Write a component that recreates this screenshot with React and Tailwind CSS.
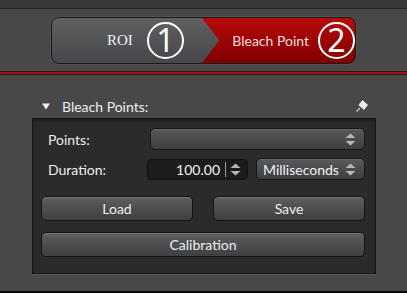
import React from "react";

function SpinArrows({ className = "" }) {
  return (
    <svg width="11" height="13" viewBox="0 0 11 13" className={className}>
      <polygon points="5.5,0.5 10.5,5 0.5,5" fill="#b4b6b8" />
      <polygon points="0.5,8 10.5,8 5.5,12.5" fill="#b4b6b8" />
    </svg>
  );
}

function Circle({ n }) {
  return (
    <div className="w-[37px] h-[37px] rounded-full border-2 border-white flex items-center justify-center text-white text-[32px] leading-none font-['Noto_Sans',sans-serif]">
      <span className="mt-[-1px]">{n}</span>
    </div>
  );
}

function Button({ children, className = "" }) {
  return (
    <div
      className={`h-[25px] rounded-[5px] border border-[#141414] bg-gradient-to-b from-[#5c5e60] to-[#3d3f41] shadow-[inset_0_1px_0_rgba(255,255,255,0.12)] flex items-center justify-center text-[#eeeeee] text-[14px] ${className}`}
    >
      {children}
    </div>
  );
}

export default function App() {
  return (
    <div className="w-[407px] h-[293px] bg-[#484848] flex flex-col font-['Lato',sans-serif] overflow-hidden">
      <div className="h-[9px] bg-[#383838] border-b border-[#242424]" />
      <div className="mt-[8px] mx-auto w-[305px] h-[47px] rounded-[8px] border border-[#1a1a1a] bg-gradient-to-b from-[#b80a0a] to-[#800000] shadow-[0_0_0_1px_rgba(255,255,255,0.06)] flex overflow-hidden">
        <div className="w-[168px] h-full bg-gradient-to-b from-[#5e6062] to-[#45474a] [clip-path:polygon(0_0,150px_0,100%_50%,150px_100%,0_100%)] flex items-center pl-[55px] gap-[14px] relative z-10">
          <span className="text-[#f2f2f2] text-[15px] font-['Liberation_Serif',serif]">ROI</span>
          <Circle n="1" />
        </div>
        <div className="ml-[-18px] flex items-center pl-[31px] gap-[9px]">
          <span className="text-[#f4dede] text-[14px] whitespace-nowrap">Bleach Point</span>
          <Circle n="2" />
        </div>
      </div>
      <div className="mt-[7px] h-[4px] border-t border-[#2a1818] border-b border-b-[#1e1e1e] bg-[#a81010]" />
      <div className="mt-[22px] h-[18px] flex items-center pl-[42px] pr-[38px]">
        <svg width="8" height="7" viewBox="0 0 8 7">
          <polygon points="0,0.5 8,0.5 4,6.5" fill="#f0f0f0" />
        </svg>
        <span className="ml-[12px] text-[#eeeeee] text-[14px]">Bleach Points:</span>
        <div className="flex-1" />
        <svg width="14" height="14" viewBox="0 0 14 14">
          <polygon points="7.5,1 13,6 9,11 3.5,6" fill="#ececec" />
          <line x1="5" y1="9" x2="1.5" y2="12.5" stroke="#d0d0d0" strokeWidth="1.2" />
        </svg>
      </div>
      <div className="mt-[3px] ml-[32px] w-[344px] h-[156px] bg-[#2b2b2b] border border-[#161616] shadow-[0_1px_0_#5a5a5a,inset_0_2px_3px_rgba(0,0,0,0.35)] pl-[8px] pr-[10px] pt-[9px] flex flex-col">
        <div className="h-[22px] flex items-center">
          <span className="pl-[7px] w-[109px] text-[#eeeeee] text-[14px]">Points:</span>
          <div className="flex-1 h-[22px] rounded-[5px] border border-[#161616] bg-gradient-to-b from-[#57595b] to-[#3c3e40] shadow-[inset_0_1px_0_rgba(255,255,255,0.1)] flex items-center justify-end pr-[8px]">
            <SpinArrows />
          </div>
        </div>
        <div className="mt-[8px] h-[22px] flex items-center">
          <span className="pl-[7px] w-[106px] text-[#eeeeee] text-[14px]">Duration:</span>
          <div className="w-[101px] h-[21px] rounded-[4px] border border-[#121212] bg-[#1c1c1c] flex items-center">
            <span className="flex-1 text-right text-[#f2f2f2] text-[14px] pr-[5px]">100.00</span>
            <div className="w-px h-[15px] bg-[#9a9a9a]" />
            <SpinArrows className="ml-[4px] mr-[6px]" />
          </div>
          <div className="ml-[8px] flex-1 h-[22px] rounded-[5px] border border-[#161616] bg-gradient-to-b from-[#57595b] to-[#3c3e40] shadow-[inset_0_1px_0_rgba(255,255,255,0.1)] flex items-center pl-[6px] pr-[8px]">
            <span className="flex-1 text-[#f2f2f2] text-[14px]">Milliseconds</span>
            <SpinArrows />
          </div>
        </div>
        <div className="mt-[16px] flex gap-[20px]">
          <Button className="w-[152px]">Load</Button>
          <Button className="flex-1">Save</Button>
        </div>
        <div className="mt-[11px] flex">
          <Button className="flex-1">Calibration</Button>
        </div>
      </div>
      <div className="flex-1" />
      <div className="h-[2px] bg-[#0a0a0a]" />
    </div>
  );
}
